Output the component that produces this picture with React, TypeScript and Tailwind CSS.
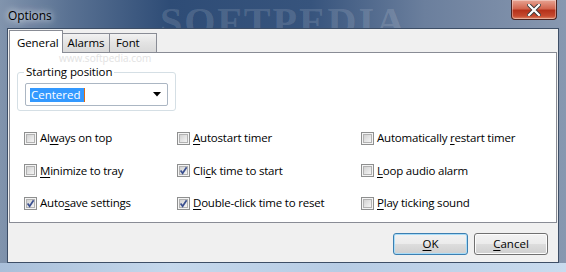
import React from "react";

const font = { fontFamily: '"Open Sans", "Noto Sans", Arial, sans-serif' };

function U({ children }: { children: React.ReactNode }) {
  return <span className="underline underline-offset-[2px] decoration-[1px]">{children}</span>;
}

function Box({ checked }: { checked: boolean }) {
  return (
    <svg width="13" height="13" viewBox="0 0 13 13" className="shrink-0">
      <defs>
        <linearGradient id="cbg" x1="0" y1="0" x2="1" y2="1">
          <stop offset="0" stopColor="#cfcfcf" />
          <stop offset="1" stopColor="#f7f7f7" />
        </linearGradient>
      </defs>
      <rect x="0.5" y="0.5" width="12" height="12" fill="#f4f4f4" stroke="#8e8f8f" />
      <rect x="2.5" y="2.5" width="8" height="8" fill="url(#cbg)" stroke="#b2b2b2" />
      {checked && (
        <path d="M3.6 6.6 L5.6 9.2 L9.6 3.2" fill="none" stroke="#3a4f8f" strokeWidth="1.7" />
      )}
    </svg>
  );
}

function Check({ checked, children }: { checked: boolean; children: React.ReactNode }) {
  return (
    <div className="flex items-center h-[20px] gap-[3px]">
      <Box checked={checked} />
      <span className="text-[11.5px] tracking-[-0.2px] text-black leading-none whitespace-nowrap">{children}</span>
    </div>
  );
}

export default function App() {
  return (
    <div
      className="relative w-[566px] h-[272px] flex flex-col px-[7px] pb-[9px] overflow-hidden bg-[linear-gradient(90deg,#8194ad_0%,#5a7293_12%,#2e4c76_30%,#37547d_55%,#6b7f9d_75%,#8898b0_100%)]"
      style={font}
    >
      <div className="absolute left-0 right-0 bottom-0 h-[9px] bg-[linear-gradient(90deg,#a9bfd9,#c5d8ec_30%,#b7cce4_60%,#c9dbee)]" />
      <div
        className="absolute left-[160px] top-[-8px] text-[40px] font-bold tracking-[2px] text-white/15 select-none"
        style={{ fontFamily: '"Liberation Serif", serif' }}
      >
        SOFTPEDIA
      </div>

      {/* title bar */}
      <div className="relative h-[28px] flex items-start justify-between">
        <span className="mt-[7px] ml-[1px] text-[12px] tracking-[-0.1px] text-black [text-shadow:0_0_6px_rgba(255,255,255,0.95),0_0_10px_rgba(255,255,255,0.7)]">
          Options
        </span>
        <div className="mr-[2px] w-[46px] h-[20px] rounded-b-[4px] border border-t-0 border-[#4a2320] bg-[linear-gradient(180deg,#e8a493_0%,#d2664f_45%,#b5321b_55%,#c64a2f_85%,#df8a6b_100%)] flex items-center justify-center shadow-[inset_0_0_0_1px_rgba(255,255,255,0.35)]">
          <svg width="14" height="12" viewBox="0 0 14 12">
            <path d="M2 1 L12 11 M12 1 L2 11" stroke="#3a3a3a" strokeWidth="4" strokeLinecap="square" />
            <path d="M2 1 L12 11 M12 1 L2 11" stroke="#ffffff" strokeWidth="2.2" strokeLinecap="square" />
          </svg>
        </div>
      </div>

      {/* client area */}
      <div className="relative flex-1 flex flex-col bg-[#f0f0f0] border border-[#3d4e66]">
        {/* tabs */}
        <div className="flex items-end h-[23px] pl-[1px] pt-[1px] relative z-10 text-[11.5px] tracking-[-0.1px]">
          <div className="h-[23px] w-[54px] bg-white border border-b-0 border-[#898c95] flex items-start pt-[3px] pl-[7px] text-black -mb-[1px]">
            General
          </div>
          <div className="h-[19px] w-[47px] border border-l-0 border-b-0 border-[#898c95] bg-[linear-gradient(180deg,#f2f2f2,#e3e3e3_50%,#d9d9d9)] flex items-center justify-center text-black">
            Alarms
          </div>
          <div className="h-[19px] w-[47px] border border-l-0 border-b-0 border-[#898c95] bg-[linear-gradient(180deg,#f2f2f2,#e3e3e3_50%,#d9d9d9)] flex items-center pl-[6px] text-black">
            Font
          </div>
        </div>

        {/* panel */}
        <div className="relative mx-[1px] h-[171px] bg-white border border-[#898c95] flex flex-col pl-[7px]">
          <div className="absolute left-[49px] top-[0px] text-[10px] leading-[11px] text-[#e2e2e2]">www.softpedia.com</div>

          {/* group box */}
          <div className="relative mt-[19px] w-[159px] h-[39px] rounded-[3px] border border-[#d5dfe5] pt-[10px] pl-[7px]">
            <span className="absolute left-[6px] top-[-8px] bg-white px-[2px] text-[11.5px] tracking-[-0.1px] text-black leading-[14px]">
              Starting position
            </span>
            <div className="w-[143px] h-[23px] rounded-[2px] border border-[#abb6c3] bg-white flex items-center justify-between pl-[4px] pr-[6px]">
              <span className="bg-[#3399ff] text-white text-[11.5px] leading-[14px] h-[14px] pl-[1px] pr-[3px] border-r border-[#e06a10]">
                Centered
              </span>
              <svg width="8" height="5" viewBox="0 0 8 5">
                <path d="M0 0 L8 0 L4 4.5 Z" fill="#000" />
              </svg>
            </div>
          </div>

          {/* checkboxes */}
          <div className="mt-[17px] ml-[7px] grid grid-cols-[153px_184px_1fr] gap-y-[12.5px]">
            <Check checked={false}>Al<U>w</U>ays on top</Check>
            <Check checked={false}><U>A</U>utostart timer</Check>
            <Check checked={false}>Automatically <U>r</U>estart timer</Check>
            <Check checked={false}><U>M</U>inimize to tray</Check>
            <Check checked={true}>Cli<U>c</U>k time to start</Check>
            <Check checked={false}><U>L</U>oop audio alarm</Check>
            <Check checked={true}>Auto<U>s</U>ave settings</Check>
            <Check checked={true}><U>D</U>ouble-click time to reset</Check>
            <Check checked={false}><U>P</U>lay ticking sound</Check>
          </div>
        </div>

        {/* buttons */}
        <div className="flex-1 flex justify-end items-start pt-[10px] pr-[10px] gap-[6px] text-[11.5px]">
          <button className="w-[75px] h-[22px] rounded-[3px] border border-[#3c7fb1] shadow-[inset_0_0_0_1px_#a8dcf8] bg-[linear-gradient(180deg,#f2f2f2_0%,#ebebeb_50%,#dddddd_51%,#cfcfcf_100%)] text-black flex items-center justify-center">
            <U>O</U>K
          </button>
          <button className="w-[74px] h-[22px] rounded-[3px] border border-[#707070] shadow-[inset_0_0_0_1px_#fcfcfc] bg-[linear-gradient(180deg,#f2f2f2_0%,#ebebeb_50%,#dddddd_51%,#cfcfcf_100%)] text-black flex items-center justify-center">
            <U>C</U>ancel
          </button>
        </div>
      </div>
    </div>
  );
}
